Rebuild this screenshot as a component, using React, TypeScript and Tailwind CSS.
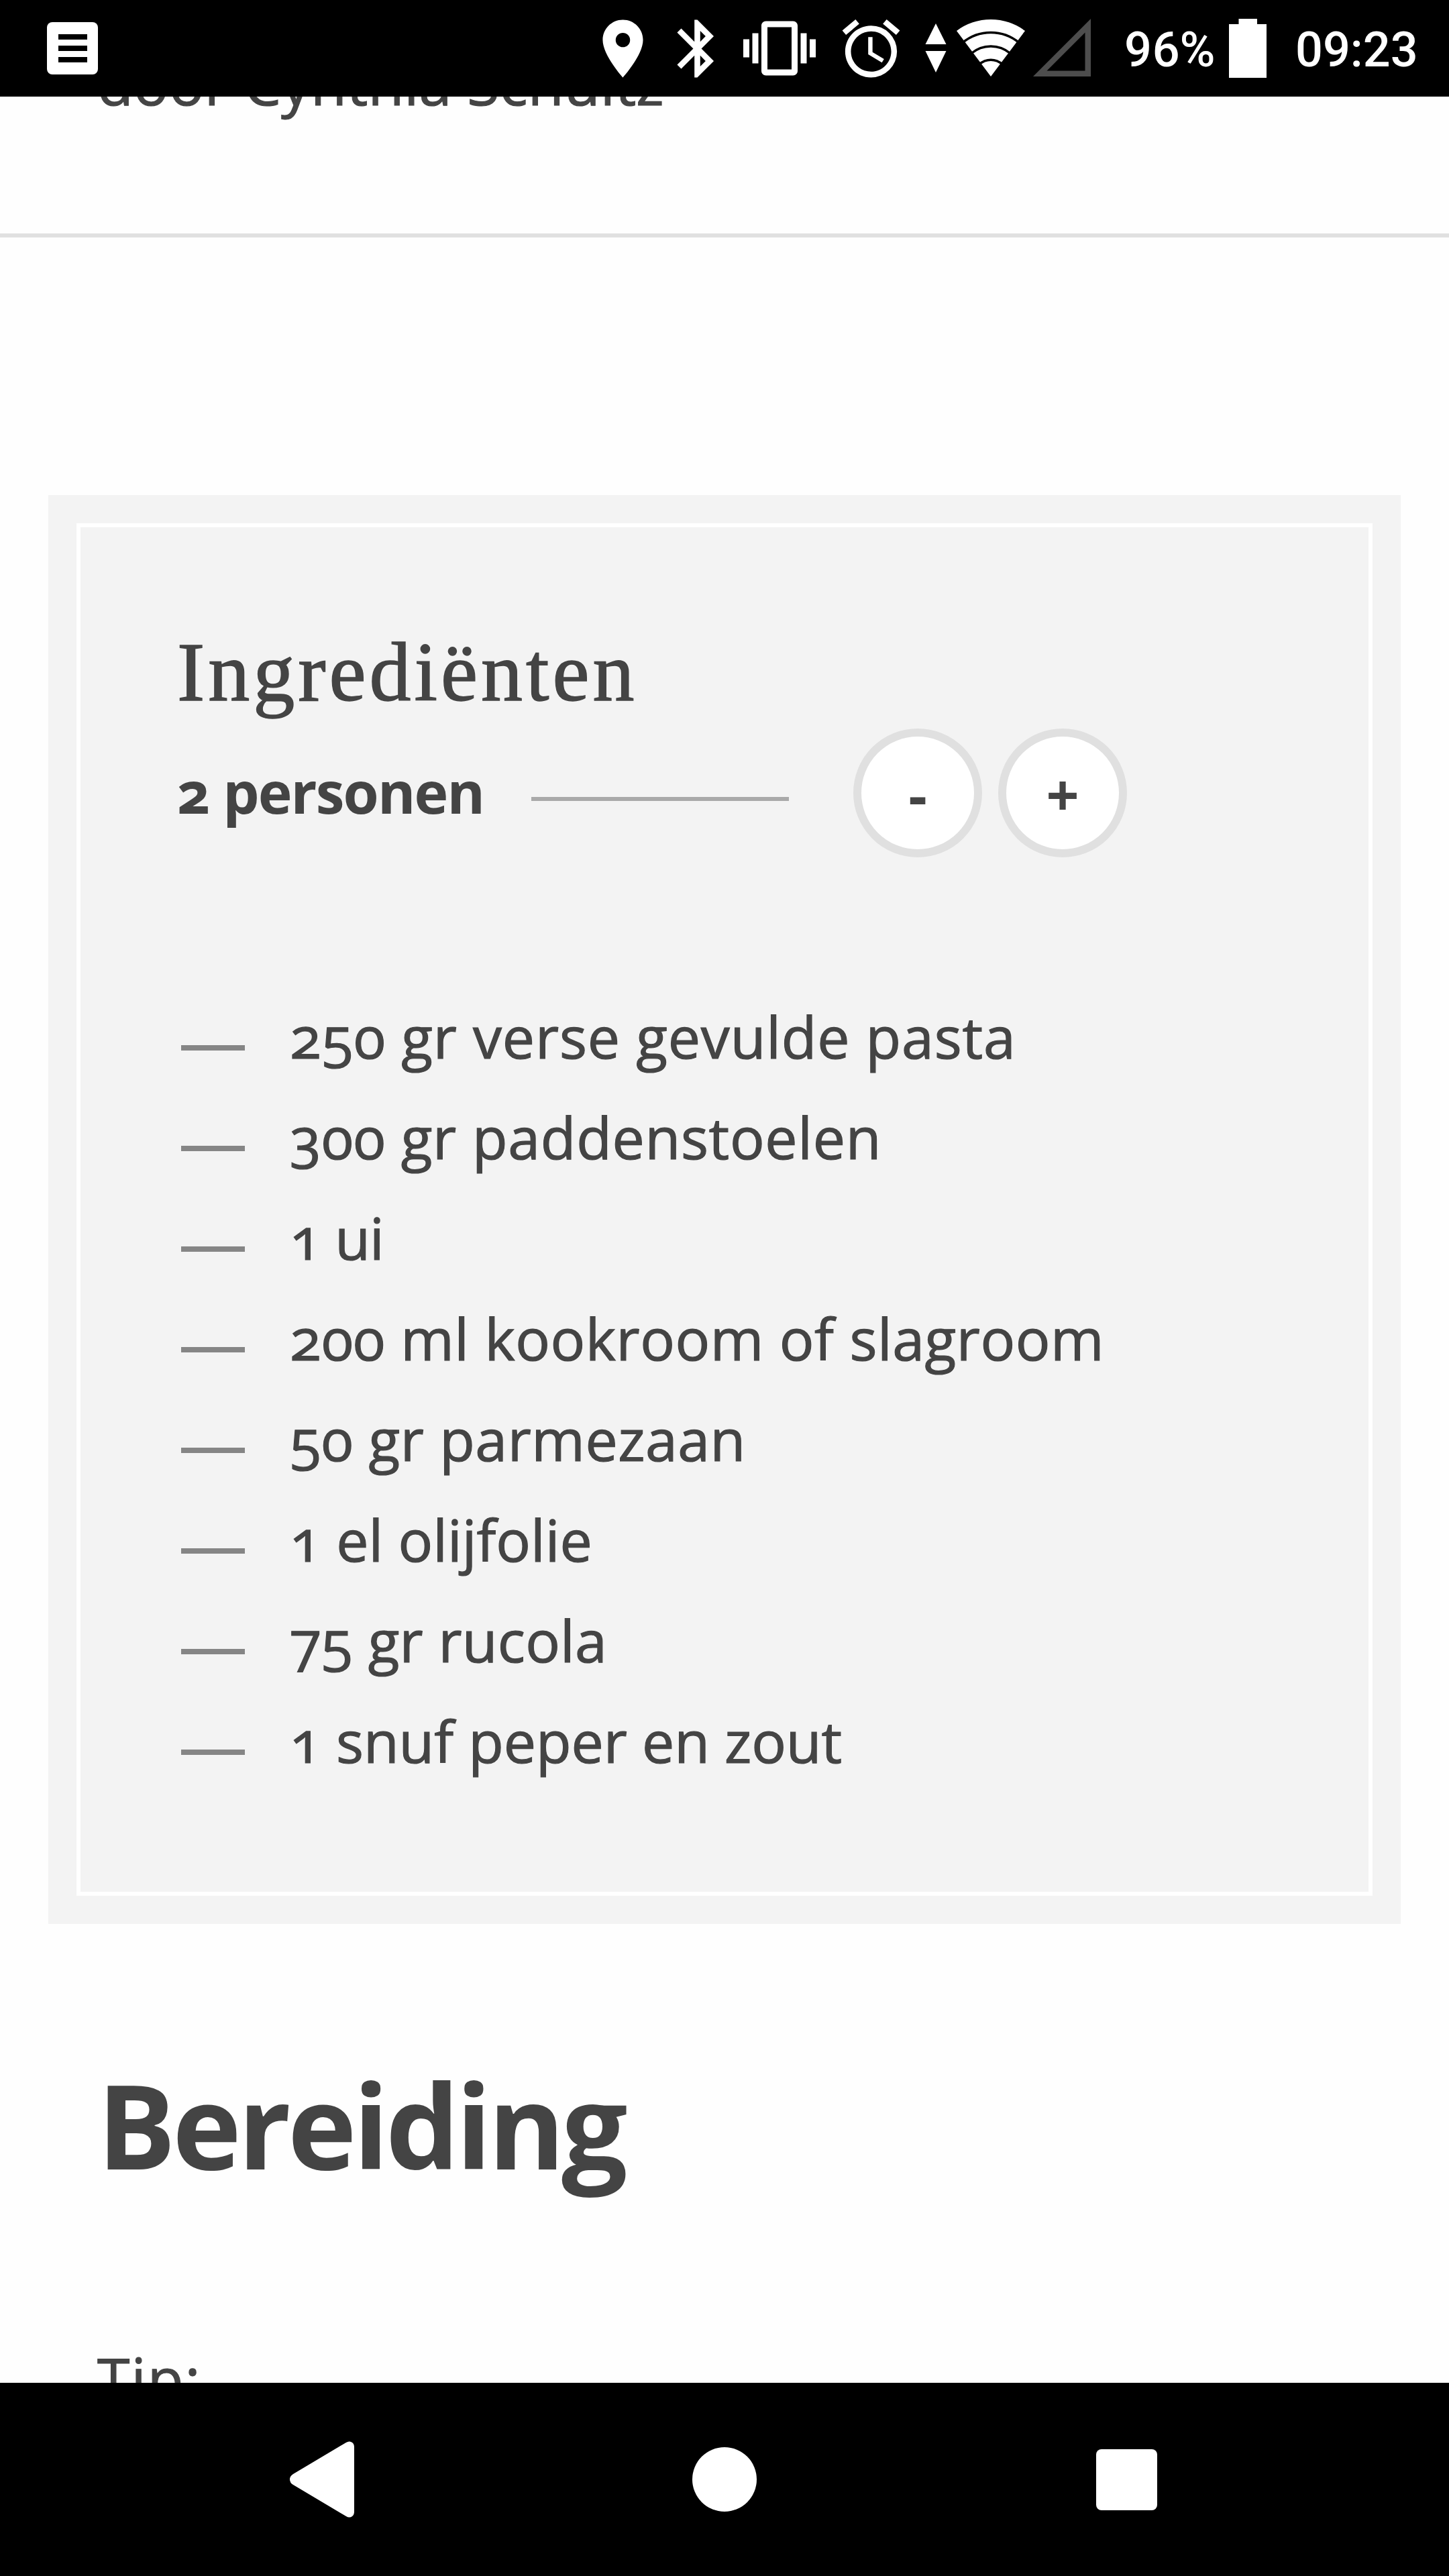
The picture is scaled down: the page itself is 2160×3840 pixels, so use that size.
import type { ReactNode } from "react";

const ingredienten = [
  { tekst: "250 gr verse gevulde pasta", tracking: "tracking-[0.85px]" },
  { tekst: "300 gr paddenstoelen", tracking: "tracking-[0.7px]" },
  { tekst: "1 ui", tracking: "tracking-[-1px]" },
  { tekst: "200 ml kookroom of slagroom", tracking: "tracking-[0.55px]" },
  { tekst: "50 gr parmezaan", tracking: "tracking-[0.5px]" },
  { tekst: "1 el olijfolie", tracking: "tracking-normal" },
  { tekst: "75 gr rucola", tracking: "tracking-[0.2px]" },
  { tekst: "1 snuf peper en zout", tracking: "tracking-[-0.1px]" },
];

function StatusIcon({ d, className }: { d: string; className: string }) {
  return (
    <svg viewBox="0 0 24 24" fill="currentColor" className={`shrink-0 ${className}`}>
      <path d={d} />
    </svg>
  );
}

function StatusBar() {
  return (
    <header className="relative z-10 flex h-[144px] shrink-0 items-start bg-black pl-[70px] font-[Roboto,sans-serif] text-[72px] font-medium leading-[84px] text-white lining-nums">
      {/* Notification */}
      <div className="mt-[33px] flex h-[78px] w-[76px] shrink-0 flex-col items-center justify-center gap-[9px] rounded-[8px] bg-white">
        <span className="h-2 w-[43px] bg-black" />
        <span className="h-2 w-[43px] bg-black" />
        <span className="h-2 w-[43px] bg-black" />
      </div>

      {/* System icons */}
      <StatusIcon
        className="ml-[731px] mt-[21px] size-[103px]"
        d="M12 2C8.13 2 5 5.13 5 9c0 5.25 7 13 7 13s7-7.75 7-13c0-3.87-3.13-7-7-7zm0 9.5a2.5 2.5 0 1 1 0-5 2.5 2.5 0 0 1 0 5z"
      />
      <StatusIcon
        className="ml-[8px] mt-[21px] size-[103px]"
        d="M17.71 7.71L12 2h-1v7.59L6.41 5 5 6.41 10.59 12 5 17.59 6.41 19 11 14.41V22h1l5.71-5.71-4.3-4.29 4.3-4.29zM13 5.83l1.88 1.88L13 9.59V5.83zm1.88 10.46L13 18.17v-3.76l1.88 1.88z"
      />
      <StatusIcon
        className="ml-[17px] mt-[18px] size-[108px]"
        d="M0 15h2V9H0v6zm3 2h2V7H3v10zm19-8v6h2V9h-2zm-3 8h2V7h-2v10zM16.5 3h-9C6.67 3 6 3.67 6 4.5v15c0 .83.67 1.5 1.5 1.5h9c.83 0 1.5-.67 1.5-1.5v-15c0-.83-.67-1.5-1.5-1.5zM16 19H8V5h8v14z"
      />
      <StatusIcon
        className="ml-[31px] mt-[21px] size-[103px]"
        d="M22 5.72l-4.6-3.86-1.29 1.53 4.6 3.86L22 5.72zM7.88 3.39L6.6 1.86 2 5.71l1.29 1.53 4.59-3.85zM12.5 8H11v6l4.75 2.85.75-1.23-4-2.37V8zM12 4c-4.97 0-9 4.03-9 9s4.02 9 9 9a9 9 0 0 0 0-18zm0 16c-3.87 0-7-3.13-7-7s3.13-7 7-7 7 3.13 7 7-3.13 7-7 7z"
      />
      <svg viewBox="0 0 32 74" fill="currentColor" className="ml-[29px] mt-[35px] h-[74px] w-[32px] shrink-0">
        <path d="M16 0L31.500 31H.5zM16 73L31.500 41H.5z" />
      </svg>
      <svg viewBox="0 0 102 86" className="ml-[15px] mt-[29px] h-[86px] w-[102px] shrink-0">
        <path d="M51 85L0 17A85 85 0 0 1 102 17z" fill="#fff" />
        <g fill="none" stroke="#000" strokeWidth="3.500">
          <path d="M9 34.500A66 66 0 0 1 93 34.500" />
          <path d="M22 50.500A45 45 0 0 1 80 50.500" />
          <path d="M34 66.800A25 25 0 0 1 68 66.800" />
        </g>
      </svg>
      <svg viewBox="0 0 86 86" className="ml-[12px] mt-[28px] size-[86px] shrink-0">
        <path d="M0 86H86V0zM20.500 77.500L77.500 20.500V77.500z" fill="#4d4d4d" fillRule="evenodd" />
      </svg>

      <span className="ml-[50px] mt-[33px] w-[156px] shrink-0">96%</span>
      <svg viewBox="0 0 56 88" fill="currentColor" className="mt-[28px] h-[88px] w-[56px] shrink-0">
        <path d="M14.500 0H42V8H56V88H0V8H14.500z" />
      </svg>
      <span className="ml-[43px] mt-[33px]">09:23</span>
    </header>
  );
}

function RoundButton({ children }: { children: ReactNode }) {
  return (
    <button className="flex size-[192px] shrink-0 items-center justify-center rounded-full border-[12px] border-[#e0e0e0] bg-white pt-1 font-bold">
      {children}
    </button>
  );
}

function Ingredienten() {
  return (
    <section className="mx-[72px] mt-[384px] bg-[#f3f3f3] p-[42px]">
      <div className="border-[6px] border-white px-[148px] pb-[150px] pt-[142px]">
        <h2 className="-ml-1 font-['Liberation_Serif',serif] text-[124px] font-normal leading-[150px] tracking-[5px] [-webkit-text-stroke:1.5px_#444]">
          Ingrediënten
        </h2>

        <div className="mt-2 flex h-[192px] items-center">
          <span className="-ml-1 w-[528px] shrink-0 whitespace-nowrap pb-1 text-[86px] font-bold tracking-[-1.9px]">
            2 personen
          </span>
          <span className="mt-[18px] h-[6px] w-[384px] shrink-0 bg-[#a9a9a9]" />
          <div className="ml-[96px] flex gap-6">
            <RoundButton>-</RoundButton>
            <RoundButton>+</RoundButton>
          </div>
        </div>

        <ul className="mt-[192px] [-webkit-text-stroke:1.2px_#444]">
          {ingredienten.map(({ tekst, tracking }) => (
            <li key={tekst} className="flex items-start whitespace-nowrap">
              <span className="ml-[2px] mt-[88px] h-[8px] w-[95px] shrink-0 bg-[#858585]" />
              <span className={`ml-[67px] ${tracking}`}>{tekst}</span>
            </li>
          ))}
        </ul>
      </div>
    </section>
  );
}

function NavBar() {
  return (
    <nav className="relative z-10 flex h-[288px] shrink-0 items-center bg-black pl-[432px]">
      <svg viewBox="0 0 96 114" fill="#fff" className="h-[114px] w-[96px]">
        <path d="M84 2Q89 -1 93 2Q96 4 96 9V105Q96 110 93 112Q89 115 84 112L5 65Q0 62 0 57Q0 52 5 49z" />
      </svg>
      <span className="ml-[504px] size-24 rounded-full bg-white" />
      <span className="ml-[506px] size-[91px] rounded-[8px] bg-white" />
    </nav>
  );
}

export default function App() {
  return (
    <div className="flex h-[3840px] w-[2160px] flex-col overflow-hidden bg-[#fefefe] font-['Open_Sans',sans-serif] text-[86px] leading-[150px] text-[#444] oldstyle-nums">
      <StatusBar />
      <main className="h-[3408px] shrink-0 overflow-hidden">
        <div className="-mt-24 border-b-[6px] border-[#e0e0e0] pb-[150px] pl-[145px]">
          <p className="text-[88px] [-webkit-text-stroke:1.2px_#444]">door Cynthia Schultz</p>
        </div>
        <Ingredienten />
        <div className="px-[145px]">
          <h1 className="mt-[199px] text-[174px] font-bold leading-[200px] tracking-[-5px]">Bereiding</h1>
          <p className="mt-[203px] text-[88px] tracking-[2px] [-webkit-text-stroke:1.2px_#444]">Tip:</p>
        </div>
      </main>
      <NavBar />
    </div>
  );
}
